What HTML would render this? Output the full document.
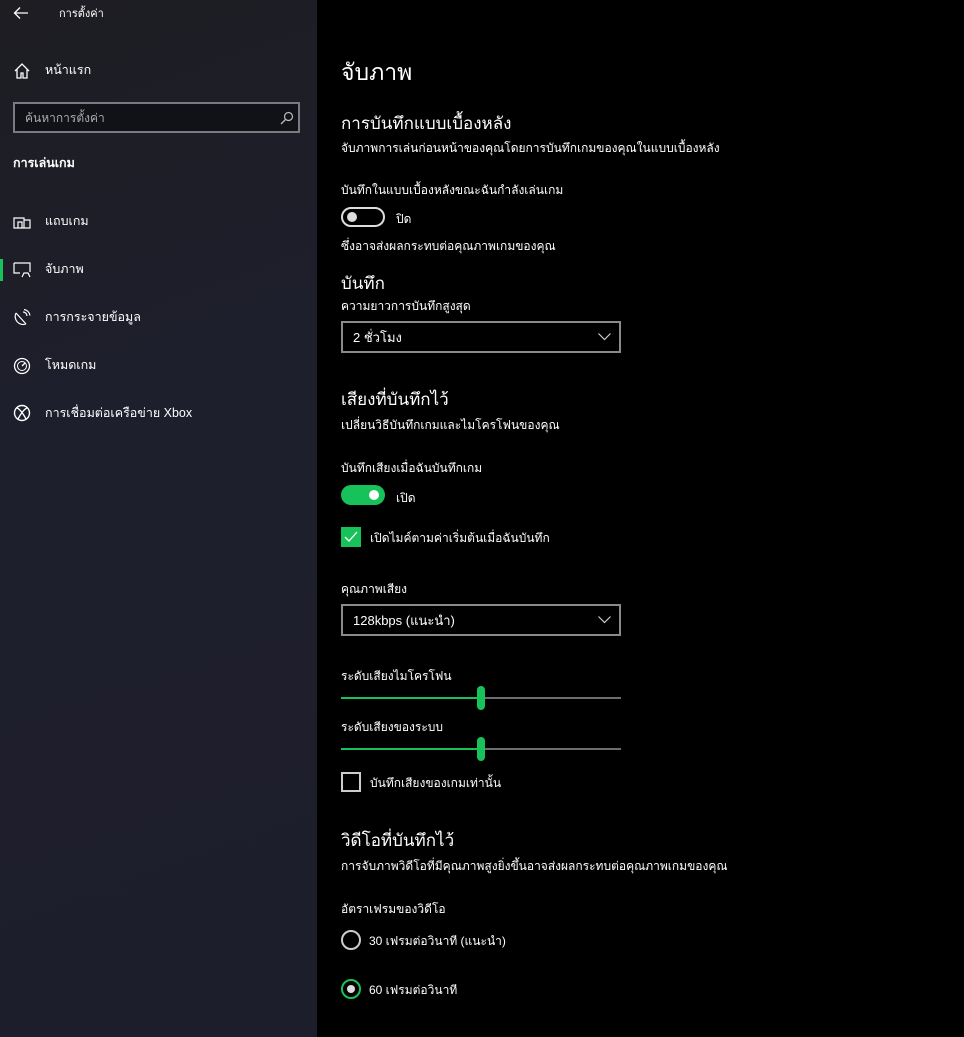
<!DOCTYPE html>
<html><head><meta charset="utf-8"><style>
*{margin:0;padding:0;box-sizing:border-box}
body{width:964px;height:1037px;background:#000;color:#fff;font-family:"Liberation Sans",sans-serif;font-size:12px;line-height:1.7;position:relative;overflow:hidden}
.side{position:absolute;left:0;top:0;width:317px;height:1037px;background:linear-gradient(160deg,#1d1d22 0%,#1e1f2d 40%,#1d1e2b 100%)}
.a{position:absolute;white-space:nowrap}
.sb{position:absolute;left:13px;top:102px;width:287px;height:31px;border:2px solid #7a7a80;background:#111118}
.ni{position:absolute;left:13px;width:18px;height:18px}
.st{font-size:12.5px}
.main .a{left:341px}
.t{margin-top:2px}
.h{font-size:17px;line-height:1.5}
.dd{position:absolute;left:341px;width:280px;height:32px;border:2px solid #8a8a8a}
.sl{position:absolute;left:341px;width:280px;height:2px;background:#6e6e6e}
.sl i{position:absolute;left:0;top:0;width:140px;height:2px;background:#17c25a}
.sl b{position:absolute;left:136px;top:-11px;width:8px;height:24px;border-radius:4px;background:#17c25a}
.rad{position:absolute;left:341px;width:20px;height:20px;border-radius:50%;border:2px solid #ccc}
</style></head><body>
<div class="side">
<svg class="a" style="left:13px;top:6px" width="16" height="14" viewBox="0 0 16 14"><path d="M15 7H2M7 1.5L1.5 7 7 12.5" stroke="#fff" stroke-width="1.3" fill="none"/></svg>
<div class="a" style="left:59px;top:5px;font-size:11px">การตั้งค่า</div>
<svg class="ni" style="top:62px" viewBox="0 0 18 18"><path d="M2 9L9 2l7 7M4 7.5V16h4v-5h2v5h4V7.5" stroke="#fff" stroke-width="1.3" fill="none"/></svg>
<div class="a st" style="left:45px;top:60px">หน้าแรก</div>
<div class="sb"><div class="a" style="left:10px;top:4px;color:#aaa;font-size:12px">ค้นหาการตั้งค่า</div>
<svg class="a" style="left:265px;top:7px" width="14" height="14" viewBox="0 0 14 14"><circle cx="8.5" cy="5.5" r="4" stroke="#bbb" fill="none" stroke-width="1.2"/><path d="M5.5 8.5L1 13" stroke="#bbb" stroke-width="1.3"/></svg></div>
<div class="a" style="left:13px;top:153px;font-size:12.5px;font-weight:bold">การเล่นเกม</div>
<svg class="ni" style="top:213px" viewBox="0 0 18 18"><path d="M1 15V5h10v2h6v8H1zM5 15V9h4v6M11 7v8" stroke="#fff" stroke-width="1.2" fill="none"/></svg>
<div class="a st" style="left:45px;top:211px">แถบเกม</div>
<div class="a" style="left:0;top:259px;width:3px;height:22px;background:#17c25a"></div>
<svg class="ni" style="top:261px" viewBox="0 0 18 18"><path d="M1 2h16v9M1 2v10h6M9 16l2-4h4l2 4" stroke="#fff" stroke-width="1.2" fill="none"/></svg>
<div class="a st" style="left:45px;top:259px">จับภาพ</div>
<svg class="ni" style="top:309px" viewBox="0 0 18 18"><path d="M3 4a8 8 0 0 0 10 11M3 4l10 11M10 3a4 4 0 0 1 4 4M11 0.5a7 7 0 0 1 6 6" stroke="#fff" stroke-width="1.2" fill="none"/></svg>
<div class="a st" style="left:45px;top:307px">การกระจายข้อมูล</div>
<svg class="ni" style="top:357px" viewBox="0 0 18 18"><circle cx="9" cy="9" r="7.5" stroke="#fff" fill="none" stroke-width="1.3"/><circle cx="9" cy="9" r="4.5" stroke="#fff" fill="none" stroke-width="1"/><path d="M9 9l3-3" stroke="#fff" stroke-width="1.3"/></svg>
<div class="a st" style="left:45px;top:355px">โหมดเกม</div>
<svg class="ni" style="top:404px" viewBox="0 0 18 18"><circle cx="9" cy="9" r="7.5" stroke="#fff" fill="none" stroke-width="1.4"/><path d="M4 4c3 1 7 7 9 11M14 4c-3 1-7 7-9 11" stroke="#fff" stroke-width="1.4" fill="none"/></svg>
<div class="a st" style="left:45px;top:403px">การเชื่อมต่อเครือข่าย Xbox</div>
</div>
<div class="main">
<div class="a" style="top:56px;font-size:23px;line-height:1.4">จับภาพ</div>
<div class="a h" style="top:111px">การบันทึกแบบเบื้องหลัง</div>
<div class="a t" style="top:136px">จับภาพการเล่นก่อนหน้าของคุณโดยการบันทึกเกมของคุณในแบบเบื้องหลัง</div>
<div class="a t" style="top:178px">บันทึกในแบบเบื้องหลังขณะฉันกำลังเล่นเกม</div>
<div class="a" style="top:207px;width:44px;height:20px;border:2px solid #ddd;border-radius:10px"><div style="position:absolute;left:4px;top:3px;width:10px;height:10px;border-radius:50%;background:#ddd"></div></div>
<div class="a t" style="left:396px !important;top:207px">ปิด</div>
<div class="a t" style="top:234px">ซึ่งอาจส่งผลกระทบต่อคุณภาพเกมของคุณ</div>
<div class="a h" style="top:271px">บันทึก</div>
<div class="a t" style="top:294px">ความยาวการบันทึกสูงสุด</div>
<div class="dd" style="top:321px"><div class="a" style="left:10px;top:4px;font-size:13px">2 ชั่วโมง</div><svg class="a" style="left:255px;top:10px" width="13" height="8" viewBox="0 0 13 8"><path d="M0.5 0.5l6 6 6-6" stroke="#ccc" fill="none" stroke-width="1.2"/></svg></div>
<div class="a h" style="top:387px">เสียงที่บันทึกไว้</div>
<div class="a t" style="top:413px">เปลี่ยนวิธีบันทึกเกมและไมโครโฟนของคุณ</div>
<div class="a t" style="top:456px">บันทึกเสียงเมื่อฉันบันทึกเกม</div>
<div class="a" style="top:485px;width:44px;height:20px;background:#17c25a;border-radius:10px"><div style="position:absolute;left:28px;top:5px;width:10px;height:10px;border-radius:50%;background:#fff"></div></div>
<div class="a t" style="left:396px !important;top:486px">เปิด</div>
<div class="a" style="top:527px;width:20px;height:20px;background:#17c25a"><svg width="20" height="20" viewBox="0 0 20 20"><path d="M4 10l4 4 8-9" stroke="#fff" fill="none" stroke-width="1.3"/></svg></div>
<div class="a t" style="left:370px !important;top:526px">เปิดไมค์ตามค่าเริ่มต้นเมื่อฉันบันทึก</div>
<div class="a t" style="top:577px">คุณภาพเสียง</div>
<div class="dd" style="top:604px"><div class="a" style="left:10px;top:4px;font-size:13px">128kbps (แนะนำ)</div><svg class="a" style="left:255px;top:10px" width="13" height="8" viewBox="0 0 13 8"><path d="M0.5 0.5l6 6 6-6" stroke="#ccc" fill="none" stroke-width="1.2"/></svg></div>
<div class="a t" style="top:664px">ระดับเสียงไมโครโฟน</div>
<div class="sl" style="top:697px"><i></i><b></b></div>
<div class="a t" style="top:715px">ระดับเสียงของระบบ</div>
<div class="sl" style="top:748px"><i></i><b></b></div>
<div class="a" style="top:772px;width:20px;height:20px;border:2px solid #ccc"></div>
<div class="a t" style="left:370px !important;top:771px">บันทึกเสียงของเกมเท่านั้น</div>
<div class="a h" style="top:828px">วิดีโอที่บันทึกไว้</div>
<div class="a t" style="top:854px">การจับภาพวิดีโอที่มีคุณภาพสูงยิ่งขึ้นอาจส่งผลกระทบต่อคุณภาพเกมของคุณ</div>
<div class="a t" style="top:897px">อัตราเฟรมของวิดีโอ</div>
<div class="rad" style="top:930px"></div>
<div class="a t" style="left:369px !important;top:929px">30 เฟรมต่อวินาที (แนะนำ)</div>
<div class="rad" style="top:979px;border-color:#17c25a"><div style="position:absolute;left:4px;top:4px;width:8px;height:8px;border-radius:50%;background:#ddd"></div></div>
<div class="a t" style="left:369px !important;top:978px">60 เฟรมต่อวินาที</div>
</div>
</body></html>
